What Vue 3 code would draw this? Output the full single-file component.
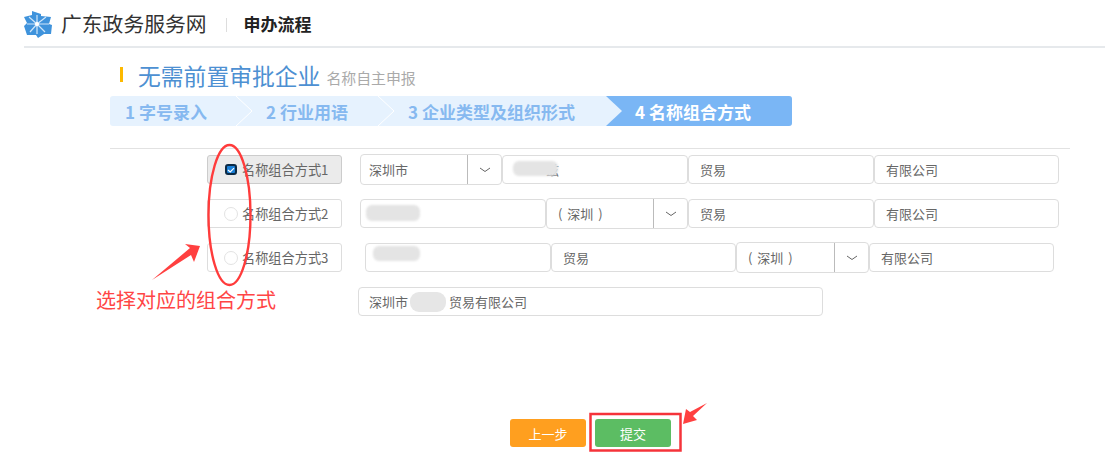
<script setup>
const rows = [
  { cls: 'r1', label: '名称组合方式1', on: true, parts: [
    { t: 'sel', w: 142, text: '深圳市' },
    { t: 'inp', w: 186, text: '兹', pad: 43, blur: [10, 5, 45, 15] },
    { t: 'inp', w: 186, text: '贸易' },
    { t: 'inp', w: 185, text: '有限公司' } ] },
  { cls: 'r2', label: '名称组合方式2', on: false, parts: [
    { t: 'inp', w: 186, text: '', blur: [5, 5, 54, 16] },
    { t: 'sel', w: 142, text: '( 深圳 )' },
    { t: 'inp', w: 186, text: '贸易' },
    { t: 'inp', w: 185, text: '有限公司' } ] },
  { cls: 'r3', label: '名称组合方式3', on: false, parts: [
    { t: 'inp', w: 186, text: '', blur: [7, 2, 47, 15] },
    { t: 'inp', w: 185, text: '贸易' },
    { t: 'sel', w: 133, text: '( 深圳 )' },
    { t: 'inp', w: 185, text: '有限公司' } ] }
]
const steps = [
  { text: '1 字号录入', w: 126 },
  { text: '2 行业用语', w: 142 },
  { text: '3 企业类型及组织形式', w: 228 },
  { text: '4 名称组合方式', w: 186, on: true }
]
</script>

<template>
  <div class="page">
    <header class="head">
      <svg class="logo" viewBox="0 0 28 27" width="28" height="27">
        <path fill="#3f93dc" d="M0 6 L8 4 L8 0 L17 3 L17 5 L27 6 L25 13 L28 14 L27 23 L20 23 L14 27 L12 24 L3 24 L0 15 L3 12Z" />
        <path stroke="#cfe6fa" stroke-width="1.2" fill="none" d="M13 13 L5 6 M13 13 L22 6 M13 13 L6 21 M13 13 L21 21 M13 13 L13 4 M13 13 L13 23 M13 13 L3 13 M13 13 L25 13" />
        <path fill="#fff" d="M13 10.5 L15.5 13 L13 15.5 L10.5 13Z" />
      </svg>
      <span class="brand">广东政务服务网</span>
      <i class="vline"></i>
      <span class="crumb">申办流程</span>
    </header>

    <main class="main">
      <div class="title">
        <i class="mark"></i>
        <span class="big">无需前置审批企业</span>
        <span class="sub">名称自主申报</span>
      </div>

      <div class="steps">
        <div v-for="(s, i) in steps" :key="i" class="step" :class="{ on: s.on, first: i === 0 }" :style="{ width: s.w + 'px' }">
          <span>{{ s.text }}</span>
          <svg v-if="i < 3" class="chev" viewBox="0 0 16 30" width="16" height="30">
            <path fill="#e6f2fe" d="M0 0 L16 15 L0 30Z" />
            <path v-if="i < 2" fill="none" stroke="#fff" stroke-width="1" d="M0 0 L16 15 L0 30" />
          </svg>
        </div>
      </div>

      <div class="rule"></div>

      <div v-for="r in rows" :key="r.label" class="row" :class="r.cls">
        <div class="pick" :class="{ on: r.on }">
          <span v-if="r.on" class="check">
            <svg viewBox="0 0 10 8" width="8" height="6"><path d="M1 4 L4 6.5 L9 1.5" fill="none" stroke="#fff" stroke-width="1.6" /></svg>
          </span>
          <span v-else class="radio"></span>
          <span class="pick-text">{{ r.label }}</span>
        </div>
        <div class="parts">
          <template v-for="(p, i) in r.parts" :key="i">
            <div v-if="p.t === 'sel'" class="box sel" :style="{ width: p.w + 'px' }">
              <span class="val">{{ p.text }}</span>
              <span class="caret">
                <svg viewBox="0 0 12 6" width="12" height="6"><path d="M1 1 L6 4.5 L11 1" fill="none" stroke="#666" stroke-width="1" /></svg>
              </span>
            </div>
            <div v-else class="box" :style="{ width: p.w + 'px', paddingLeft: p.pad ? p.pad + 'px' : null }">
              <span class="val">{{ p.text }}</span>
              <span v-if="p.blur" class="blur" :style="{ left: p.blur[0] + 'px', top: p.blur[1] + 'px', width: p.blur[2] + 'px', height: p.blur[3] + 'px' }"></span>
            </div>
          </template>
        </div>
      </div>

      <div class="result">
        <div class="box wide">
          <span class="val">深圳市</span><span class="gap"></span><span class="val">贸易有限公司</span>
        </div>
      </div>

      <div class="actions">
        <button class="btn prev">上一步</button>
        <button class="btn next">提交</button>
      </div>
    </main>

    <svg class="marks" width="1105" height="462" viewBox="0 0 1105 462">
      <ellipse cx="229.5" cy="215" rx="21" ry="70" fill="none" stroke="#ff3b3b" stroke-width="2.4" />
      <path fill="#ff4040" d="M152 280 L190 248 L185 244 L200 246 L194 262 L191 255Z" />
      <rect x="590.5" y="414" width="90" height="36.5" fill="none" stroke="#f5333a" stroke-width="2.5" />
      <path fill="#ff4040" d="M707 403 L693 416 L697 420 L683 424 L686 409 L690 412Z" />
    </svg>
    <span class="note">选择对应的组合方式</span>
  </div>
</template>

<style>
html, body { margin: 0; background: #fff; }
</style>

<style scoped>
.page {
  position: relative;
  width: 1105px;
  height: 462px;
  overflow: hidden;
  background: #fff;
  font-family: "Noto Sans CJK SC", "Liberation Sans", sans-serif;
  color: #555;
}
.head {
  display: flex;
  align-items: center;
  height: 46px;
  margin-left: 24px;
  border-bottom: 2px solid #e6e9ec;
}
.logo { flex: none; margin-top: 2px; }
.brand { margin-left: 9px; font-size: 20.8px; line-height: 28px; color: #333; }
.vline { width: 1px; height: 14px; margin: 3px 0 0 19px; background: #ddd; }
.crumb { margin-left: 17px; font-size: 17px; font-weight: 700; color: #222; margin-top: 1px; }

.main { padding-left: 110px; }
.title {
  display: flex;
  align-items: center;
  height: 30px;
  margin-top: 13px;
  padding-left: 10px;
}
.mark { width: 3px; height: 15px; margin-top: -4px; background: #fdb900; }
.big { margin-left: 15px; font-size: 22.8px; color: #4d90d2; line-height: 30px; }
.sub { margin-left: 6px; margin-top: 3px; font-size: 14.9px; color: #aaa; }

.steps {
  display: flex;
  width: 682px;
  height: 30px;
  margin-top: 5px;
  border-radius: 3px;
  overflow: hidden;
  background: #e6f2fe;
}
.step {
  position: relative;
  box-sizing: border-box;
  flex: none;
  display: flex;
  align-items: center;
  padding-left: 30px;
  font-size: 17px;
  font-weight: 700;
  color: #86b9f0;
}
.step.first { padding-left: 15px; }
.step.on { background: #7ab6f5; color: #fff; padding-left: 29px; }
.chev { position: absolute; left: 100%; top: 0; z-index: 1; }

.rule { width: 960px; height: 1px; margin-top: 22px; background: #e2e2e2; }

.row { display: flex; align-items: center; height: 31px; }
.r1 { margin-top: 5px; }
.r2 { margin-top: 13px; }
.r3 { margin-top: 13px; }
.pick {
  box-sizing: border-box;
  width: 135px;
  height: 29px;
  margin-left: 97px;
  display: flex;
  align-items: center;
  padding-left: 18px;
  border: 1px solid #ddd;
  border-radius: 3px;
  font-size: 13.2px;
  color: #666;
}
.pick.on { background: #ebebeb; border-color: #ccc; }
.check {
  box-sizing: border-box;
  width: 12px;
  height: 11px;
  display: flex;
  align-items: center;
  justify-content: center;
  margin-left: -1px;
  background: #1a7fd6;
  border: 2px solid #0b2a45;
  border-radius: 3px;
}
.radio {
  box-sizing: border-box;
  width: 14px;
  height: 14px;
  border: 1px solid #e3e3e3;
  border-radius: 50%;
  background: #fff;
  margin-left: -2px;
}
.pick-text { margin-left: 4px; white-space: nowrap; }
.on .pick-text { margin-left: 5px; }

.parts { display: flex; align-items: center; margin-left: 18px; }
.r3 .parts { margin-left: 23px; }
.box {
  position: relative;
  box-sizing: border-box;
  flex: none;
  height: 29px;
  display: flex;
  align-items: center;
  padding-left: 11px;
  background: #fff;
  border: 1px solid #ddd;
  border-radius: 4px;
  font-size: 13px;
  color: #666;
  white-space: nowrap;
}
.box.sel { height: 31px; padding-left: 8px; word-spacing: 2px; }
.r2 .sel, .r3 .sel { padding-left: 11px; }
.val { display: block; }
.caret {
  position: absolute;
  right: 0;
  top: 0;
  bottom: 0;
  width: 33px;
  display: flex;
  align-items: center;
  justify-content: center;
  border-left: 1px solid #bbb;
}
.blur {
  position: absolute;
  background: #e4e4e4;
  border-radius: 6px;
  filter: blur(1px);
}
.result { margin-top: 14px; margin-left: 248px; }
.box.wide { width: 465px; padding-left: 10px; }
.gap { display: inline-block; width: 36px; height: 20px; margin: 0 3px 0 2px; background: #e6e6e6; border-radius: 9px; }

.actions {
  display: flex;
  gap: 9px;
  margin-top: 103px;
  margin-left: 400px;
}
.btn {
  width: 76px;
  height: 28px;
  border: none;
  border-radius: 3px;
  color: #fff;
  font-family: inherit;
  font-size: 13px;
  padding: 0;
}
.prev { background: #ff9f1f; }
.next { background: #5cbd63; }

.marks { position: absolute; left: 0; top: 0; pointer-events: none; }
.note {
  position: absolute;
  left: 96px;
  top: 286px;
  font-size: 20px;
  line-height: 28px;
  color: #ff4545;
  white-space: nowrap;
}
</style>
